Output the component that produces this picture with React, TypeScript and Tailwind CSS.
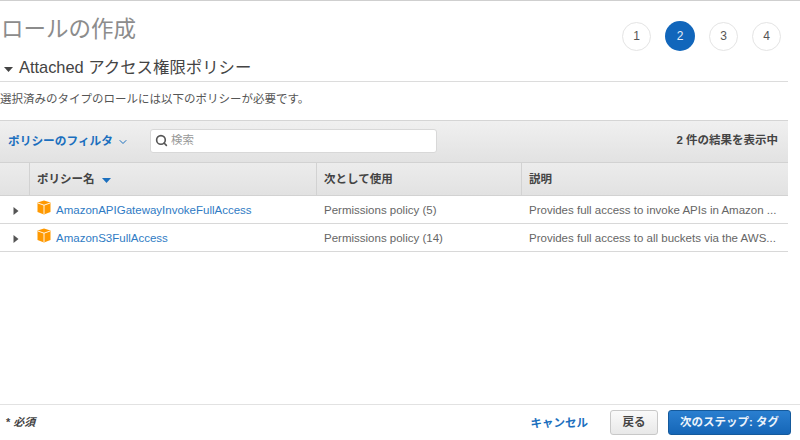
import { ChevronDown, Search } from "lucide-react";

const font = { fontFamily: '"Liberation Sans", "Noto Sans CJK JP", sans-serif' };

const steps = [1, 2, 3, 4];

const rows = [
  {
    name: "AmazonAPIGatewayInvokeFullAccess",
    usedAs: "Permissions policy (5)",
    desc: "Provides full access to invoke APIs in Amazon ...",
  },
  {
    name: "AmazonS3FullAccess",
    usedAs: "Permissions policy (14)",
    desc: "Provides full access to all buckets via the AWS...",
  },
];

function BoxIcon() {
  return (
    <svg width="14" height="15" viewBox="0 0 14 15" className="shrink-0">
      <path d="M7 0.5 L13.5 2.6 V12 L7 14.5 L0.5 12 V2.6 Z" fill="#f90" />
      <path d="M0.8 3 L7 5.2 L13.2 3 M7 5.2 V14" fill="none" stroke="#fff" strokeWidth="0.9" />
    </svg>
  );
}

function Caret() {
  return (
    <svg width="6" height="8" viewBox="0 0 6 8" className="shrink-0">
      <path d="M0.5 0 L5.5 4 L0.5 8 Z" fill="#555" />
    </svg>
  );
}

export default function App() {
  return (
    <div className="w-[800px] h-[440px] bg-white overflow-hidden flex flex-col border-t border-[#cfcfcf]" style={font}>
      <div className="flex justify-between items-start h-[49px] pr-[19px]">
        <h1 className="text-[22.5px] leading-[28px] mt-[15px] ml-[1px] text-[#8c8c8c]">ロールの作成</h1>
        <div className="flex gap-[14px] mt-[20px] items-center">
          {steps.map((s) => (
            <div
              key={s}
              className={
                s === 2
                  ? "w-[30px] h-[30px] rounded-full bg-[#1166bb] text-[#e4edf7] text-[12px] flex items-center justify-center"
                  : "w-[29px] h-[29px] rounded-full border border-[#e4e4e4] text-[#555] text-[12px] flex items-center justify-center"
              }
            >
              {s}
            </div>
          ))}
        </div>
      </div>

      <div className="w-[788px] h-[32px] border-b border-[#dcdcdc] flex items-center pl-[4px] gap-[6px]">
        <svg width="9" height="5" viewBox="0 0 9 5" className="shrink-0 mt-[8px]">
          <path d="M0 0 H9 L4.5 5 Z" fill="#444" />
        </svg>
        <span className="text-[16.4px] text-[#444] mt-[4px]">Attached アクセス権限ポリシー</span>
      </div>

      <p className="text-[11.5px] leading-[16px] text-[#555] mt-[9px] whitespace-nowrap">
        選択済みのタイプのロールには以下のポリシーが必要です。
      </p>

      <div className="w-[788px] mt-[13px]">
        <div className="h-[42px] bg-gradient-to-b from-[#f0f0f0] to-[#e2e2e2] border-t border-[#d5d5d5] flex items-center pl-[8px] pr-[10px] pb-[2px]">
          <span className="text-[11.7px] font-bold text-[#1b6fbe] whitespace-nowrap">ポリシーのフィルタ</span>
          <ChevronDown size={12} strokeWidth={2} className="text-[#1b6fbe] ml-[4px] mt-[2px]" />
          <div className="w-[287px] h-[24px] ml-[21px] bg-white rounded-[3px] border border-[#d8d8d8] flex items-center pl-[4px] gap-[3px]">
            <Search size={13} strokeWidth={3} className="text-[#555]" />
            <span className="text-[11.5px] text-[#999]">検索</span>
          </div>
          <span className="ml-auto text-[11.5px] font-bold text-[#444] whitespace-nowrap">2 件の結果を表示中</span>
        </div>

        <div className="h-[34px] grid grid-cols-[29px_287px_205px_1fr] bg-gradient-to-b from-[#ececec] to-[#e2e2e2] border-t border-b border-[#d2d2d2] text-[11.5px] font-bold text-[#444]">
          <div />
          <div className="border-l border-[#d2d2d2] flex items-center pl-[7px] pt-[2px] gap-[7px]">
            <span>ポリシー名</span>
            <svg width="9" height="5" viewBox="0 0 9 5">
              <path d="M0 0 H9 L4.5 5 Z" fill="#1b6fbe" />
            </svg>
          </div>
          <div className="border-l border-[#d2d2d2] flex items-center pl-[7px] pt-[2px]">次として使用</div>
          <div className="border-l border-[#d2d2d2] flex items-center pl-[7px] pt-[2px]">説明</div>
        </div>

        {rows.map((r) => (
          <div key={r.name} className="h-[28px] grid grid-cols-[29px_287px_205px_1fr] border-b border-[#d8d8d8] text-[11.5px] text-[#666] items-center pt-[2px]">
            <div className="pl-[13px]">
              <Caret />
            </div>
            <div className="flex items-center pl-[8px] gap-[5px]">
              <div className="-mt-[6px]">
                <BoxIcon />
              </div>
              <span className="text-[#2f7bc4] whitespace-nowrap">{r.name}</span>
            </div>
            <div className="pl-[8px] whitespace-nowrap">{r.usedAs}</div>
            <div className="pl-[8px] whitespace-nowrap overflow-hidden">{r.desc}</div>
          </div>
        ))}
      </div>

      <div className="mt-auto h-[36px] border-t border-[#e2e2e2] flex items-center pl-[6px] pr-[9px]">
        <span className="text-[11px] font-bold text-[#444]">
          * <em>必須</em>
        </span>
        <span className="ml-auto text-[11.5px] font-bold text-[#1b6fbe] mt-[2px]">キャンセル</span>
        <button className="ml-[22px] w-[48px] h-[25px] rounded-[3px] border border-[#c8c8c8] bg-gradient-to-b from-[#fafafa] to-[#e8e8e8] text-[11.5px] font-bold text-[#444]">
          戻る
        </button>
        <button className="ml-[10px] w-[123px] h-[25px] rounded-[3px] border border-[#155a9c] bg-gradient-to-b from-[#2a7fd0] to-[#1566b7] text-[11.5px] font-bold text-[#eef4fb] whitespace-nowrap">
          次のステップ: タグ
        </button>
      </div>
    </div>
  );
}
